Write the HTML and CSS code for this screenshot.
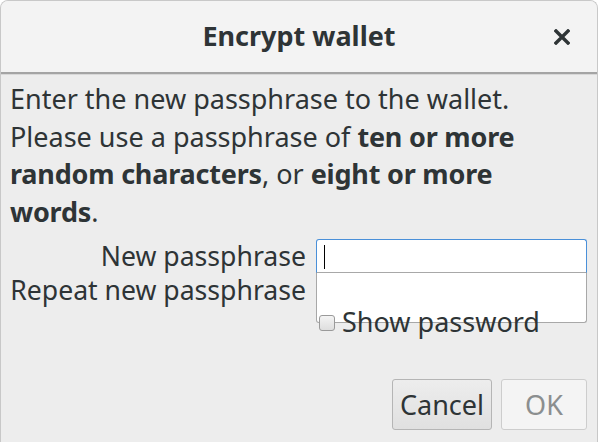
FILE: index.html
```html
<!DOCTYPE html>
<html>
<head>
<meta charset="utf-8">
<link rel="stylesheet" href="styles.css">
</head>
<body>
<div class="window">
  <header class="titlebar">
    <span class="title">Encrypt wallet</span>
    <span class="close">
      <svg width="16" height="16" viewBox="0 0 16 16"><path d="M2 2 L14 14 M14 2 L2 14" stroke="#2e3436" stroke-width="3.4" stroke-linecap="square"/></svg>
    </span>
  </header>
  <main class="body">
    <p class="intro">Enter the new passphrase to the wallet.<br>Please use a passphrase of <b>ten or more random characters</b>, or <b>eight or more words</b>.</p>
    <div class="form">
      <label class="lbl">New passphrase</label>
      <div class="field focus"><span class="caret"></span></div>
      <label class="lbl">Repeat new passphrase</label>
      <div class="field second"></div>
      <div></div>
      <div class="check"><span class="box"></span><span>Show password</span></div>
    </div>
    <div class="buttons">
      <button class="btn">Cancel</button>
      <button class="btn disabled">OK</button>
    </div>
  </main>
</div>
</body>
</html>
```
FILE: styles.css
```css
html, body { margin: 0; padding: 0; background: #ffffff; }
body { width: 598px; height: 442px; overflow: hidden; font-family: "Noto Sans", "DejaVu Sans", sans-serif; color: #2e3436; }
.window { width: 598px; height: 442px; background: #ededed; border-radius: 8px 8px 0 0; overflow: hidden; box-sizing: border-box; border: 1px solid #c8c8c8; border-bottom: none; }
.titlebar { height: 71px; background: #f3f3f3; border-bottom: 2px solid #a4a4a4; box-shadow: 0 1px 0 #d8d8d8; position: relative; display: flex; align-items: center; justify-content: center; }
.title { font-weight: bold; font-size: 27px; margin-top: -2px; }
.close { position: absolute; left: 553px; top: 27px; width: 16px; height: 16px; }
.body { padding: 6px 10px 0 9px; }
.intro { margin: 0; font-size: 27px; line-height: 37.5px; width: 560px; }
.intro b { font-weight: bold; letter-spacing: -0.2px; }
.form { display: grid; grid-template-columns: 297px 271px; grid-template-rows: 34px 34px 30px; column-gap: 9px; margin-top: 9px; font-size: 27px; }
.lbl { text-align: right; line-height: 34px; height: 34px; white-space: nowrap; font-size: 26.6px; padding-right: 1px; }
.field { background: #fff; height: 34px; box-sizing: border-box; border: 1px solid #a8a8a8; }
.field.focus { border-color: #4a90d9; border-radius: 3px 3px 0 0; border-bottom-color: #a8a8a8; position: relative; }
.caret { position: absolute; left: 7px; top: 5px; width: 1px; height: 24px; background: #000; }
.field.second { border-top: none; border-radius: 0 0 3px 3px; height: 50px; grid-row: 2 / span 2; grid-column: 2; align-self: start; }
.check { grid-column: 2; grid-row: 3; display: flex; align-items: center; gap: 7px; line-height: 30px; position: relative; padding-left: 3px; white-space: nowrap; }
.box { width: 14px; height: 14px; border: 1px solid #9a9a9a; border-radius: 3px; background: linear-gradient(#f4f4f4, #dedede); margin-top: 1px; }
.buttons { display: flex; justify-content: flex-end; gap: 9px; margin-top: 42px; }
.btn { font-family: inherit; font-size: 27px; height: 51px; padding: 0 7px; border: 1px solid #b5b5b5; border-radius: 3px; background: linear-gradient(#ededed, #e0e0e0); color: #2e3436; }
.btn.disabled { background: #f4f4f4; color: #8b8e8f; border-color: #cdcdcd; width: 86px; }
```
